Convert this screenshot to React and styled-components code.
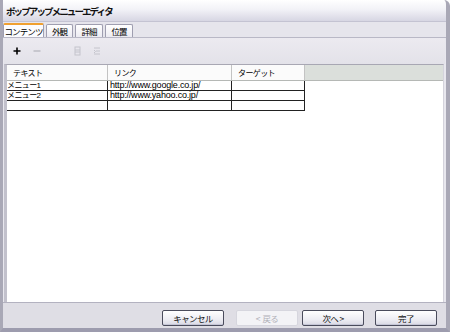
import React from 'react';
import styled, { createGlobalStyle } from 'styled-components';

const GlobalStyle = createGlobalStyle`
    html, body {
        margin: 0;
        padding: 0;
        background: #ffffff;
    }
    body {
        font-family: "Liberation Sans", "Noto Sans CJK JP", sans-serif;
        font-size: 10px;
        color: #000;
    }
`;

const Window = styled.div`
    width: 450px;
    height: 332px;
    box-sizing: border-box;
    display: flex;
    flex-direction: column;
    background: #e4e3ea;
    border-left: 3px solid #a9a8b6;
    border-right: 4px solid #a9a8b6;
    border-bottom: 4px solid #9d9cae;
    border-top-right-radius: 6px;
    overflow: hidden;
`;

const TitleBar = styled.div`
    height: 21px;
    flex-shrink: 0;
    display: flex;
    align-items: center;
    padding-left: 3px;
    background: linear-gradient(#ffffff 0%, #f2f2f7 45%, #d7d6e3 100%);
    border-bottom: 1px solid #c4c3d2;
`;

const Title = styled.span`
    font-family: "Noto Sans CJK JP", sans-serif;
    font-weight: 700;
    font-size: 9.5px;
    letter-spacing: -1.9px;
    color: #111;
    white-space: nowrap;
`;

const TabStrip = styled.div`
    height: 15px;
    flex-shrink: 0;
    display: flex;
    align-items: flex-end;
    gap: 2px;
    background: #e6e5ec;
`;

const Tab = styled.div`
    height: ${p => (p.$active ? 14 : 13)}px;
    box-sizing: border-box;
    width: ${p => p.$w}px;
    display: flex;
    align-items: center;
    justify-content: center;
    font-family: "Noto Sans CJK JP", sans-serif;
    font-size: 8.5px;
    letter-spacing: -0.9px;
    white-space: nowrap;
    background: ${p => (p.$active ? '#fcfcfe' : 'linear-gradient(#ffffff, #ecebf2)')};
    border: 1px solid #9f9eb0;
    border-bottom: none;
    border-top: ${p => (p.$active ? '2px solid #f0a030' : '1px solid #9f9eb0')};
    border-radius: 2px 2px 0 0;
`;

const Panel = styled.div`
    flex: 1;
    display: flex;
    flex-direction: column;
    padding: 0 1px;
    border-top: 1px solid #b9b8c6;
    background: #e8e7ee;
`;

const Toolbar = styled.div`
    height: 26px;
    flex-shrink: 0;
    display: flex;
    align-items: center;
    padding-left: 3px;
    background: linear-gradient(#eceaf0, #e3e2e9);
`;

const ToolButton = styled.div`
    width: 20px;
    height: 16px;
    display: flex;
    align-items: center;
    justify-content: center;
    margin-right: ${p => p.$gap || 0}px;
`;

const ListArea = styled.div`
    flex: 1;
    display: flex;
    flex-direction: column;
    background: #ffffff;
    border-left: 3px solid #c2c1cc;
    border-top: 1px solid #a8a7b3;
    border-right: 1px solid #d4d3dc;
    margin-right: 1px;
`;

const HeaderRow = styled.div`
    height: 15px;
    display: flex;
    background: #dcdfdc;
    border-bottom: 1px solid #b5b8b5;
`;

const HeaderCell = styled.div`
    width: ${p => p.$w}px;
    flex-shrink: 0;
    box-sizing: border-box;
    padding-left: 6px;
    display: flex;
    align-items: center;
    font-family: "Noto Sans CJK JP", sans-serif;
    font-size: 8px;
    letter-spacing: -0.6px;
    background: #fbfbfb;
    border-right: 1px solid #c3c3c3;
`;

const HeaderFill = styled.div`
    flex: 1;
    background: #dbdfdb;
`;

const Grid = styled.div`
    display: grid;
    grid-template-columns: 101px 124px 73px;
    width: 298px;
    border-bottom: 1px solid #222;
`;

const Cell = styled.div`
    height: 9px;
    border-top: ${p => (p.$first ? 'none' : '1px solid #222')};
    border-right: 1px solid #222;
    font-family: "Liberation Sans", "Noto Sans CJK JP", sans-serif;
    font-size: ${p => (p.$link ? 9 : 8)}px;
    line-height: 9px;
    letter-spacing: ${p => (p.$link ? -0.2 : -0.6)}px;
    white-space: nowrap;
    overflow: hidden;
    padding-left: ${p => (p.$link ? 2 : 0)}px;
`;

const Footer = styled.div`
    height: 18px;
    flex-shrink: 0;
    display: flex;
    align-items: flex-start;
    justify-content: flex-end;
    padding-right: 9px;
    padding-top: 7px;
    box-sizing: content-box;
    background: #dfdee5;
    border-top: 1px solid #b3b2c0;
`;

const Button = styled.div`
    width: 62px;
    height: 16px;
    box-sizing: border-box;
    margin-left: ${p => p.$ml}px;
    display: flex;
    align-items: center;
    justify-content: center;
    font-family: "Noto Sans CJK JP", sans-serif;
    font-size: 8.5px;
    letter-spacing: -0.6px;
    white-space: pre;
    color: ${p => (p.$disabled ? '#b0b0b8' : '#111')};
    background: ${p => (p.$disabled ? '#f3f3f6' : 'linear-gradient(#ffffff, #ededf3 60%, #d9d9e4)')};
    border: 1px solid ${p => (p.$disabled ? '#d6d6de' : '#4a4c5c')};
    border-radius: 2px;
    box-shadow: ${p => (p.$disabled ? 'none' : 'inset 0 -1px 0 #c5c6d6')};
`;

const PlusIcon = () => (
    <svg width="8" height="8" viewBox="0 0 8 8">
        <path d="M4 0.5v7M0.5 4h7" stroke="#000" strokeWidth="1.6" />
    </svg>
);

const MinusIcon = () => (
    <svg width="8" height="8" viewBox="0 0 8 8">
        <path d="M0.5 4h7" stroke="#a8a8b0" strokeWidth="1.2" />
    </svg>
);

const UpIcon = () => (
    <svg width="7" height="10" viewBox="0 0 7 10">
        <rect x="1" y="1" width="5" height="8" fill="none" stroke="#c4c4cc" />
        <path d="M1 4h5M1 6h5" stroke="#c4c4cc" />
    </svg>
);

const DownIcon = () => (
    <svg width="8" height="10" viewBox="0 0 8 10">
        <path d="M1 2h6M3 5h4M1 8h6M1 4l1.5 1.5L1 7" stroke="#c4c4cc" fill="none" />
    </svg>
);

const rows = [
    ['メニュー1', 'http://www.google.co.jp/', ''],
    ['メニュー2', 'http://www.yahoo.co.jp/', ''],
    ['', '', ''],
];

export default function App() {
    return (
        <>
            <GlobalStyle />
            <Window>
                <TitleBar>
                    <Title>ポップアップメニューエディタ</Title>
                </TitleBar>
                <TabStrip>
                    <Tab $active $w={41}>コンテンツ</Tab>
                    <Tab $w={27}>外観</Tab>
                    <Tab $w={28}>詳細</Tab>
                    <Tab $w={28}>位置</Tab>
                </TabStrip>
                <Panel>
                    <Toolbar>
                        <ToolButton><PlusIcon /></ToolButton>
                        <ToolButton $gap={20}><MinusIcon /></ToolButton>
                        <ToolButton><UpIcon /></ToolButton>
                        <ToolButton><DownIcon /></ToolButton>
                    </Toolbar>
                    <ListArea>
                        <HeaderRow>
                            <HeaderCell $w={101}>テキスト</HeaderCell>
                            <HeaderCell $w={124}>リンク</HeaderCell>
                            <HeaderCell $w={73}>ターゲット</HeaderCell>
                            <HeaderFill />
                        </HeaderRow>
                        <Grid>
                            {rows.map((r, i) =>
                                r.map((c, j) => (
                                    <Cell key={i + '-' + j} $first={i === 0} $link={j === 1}>{c}</Cell>
                                ))
                            )}
                        </Grid>
                    </ListArea>
                </Panel>
                <Footer>
                    <Button $ml={0}>キャンセル</Button>
                    <Button $ml={12} $disabled>{'<  戻る'}</Button>
                    <Button $ml={4}>{'次へ >'}</Button>
                    <Button $ml={11}>完了</Button>
                </Footer>
            </Window>
        </>
    );
}
